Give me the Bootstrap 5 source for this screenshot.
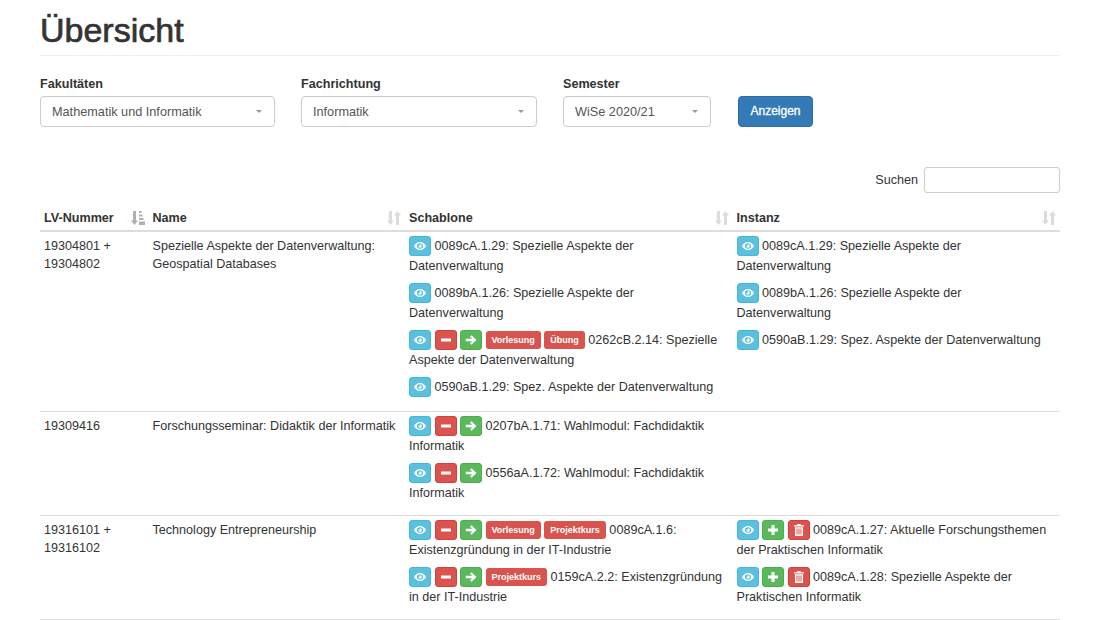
<!DOCTYPE html>
<html lang="de"><head><meta charset="utf-8"><title>Übersicht</title>
<link href="https://cdn.jsdelivr.net/npm/bootstrap@5.3.0/dist/css/bootstrap.min.css" rel="stylesheet">
<style>
html,body{height:620px;overflow:hidden}
body{font:12.6px/20px "Liberation Sans",Arial,sans-serif;color:#333;background:#fff;padding:0 40px}
.head-title{font:400 34px/38px "Liberation Sans",Arial,sans-serif;color:#333;margin:0;padding:11px 0 6px;border-bottom:1px solid #eee;-webkit-text-stroke:.7px #333}
.filter-row{margin-top:18px;height:72px}
.filter-row label{font-weight:700;display:block;margin-bottom:2px;line-height:20px;color:#333}
.pick{height:31px;border:1px solid #ccc;border-radius:4px;padding:0 12px 0 11px;color:#555;font-size:12.7px;box-shadow:inset 0 1px 1px rgba(0,0,0,.03)}
.pick i{width:0;height:0;border:3px solid transparent;border-top:3px solid #999;border-bottom:0}
.w-a{width:235px;margin-right:26px}.w-b{width:236px;margin-right:26px}.w-c{width:148px;margin-right:27px}
.go{width:75px;height:31px;padding:0;font-size:12px;line-height:29px;background:#337ab7;border:1px solid #2e6da4;border-radius:4px;color:#fff;margin-top:22px;-webkit-text-stroke:.3px #fff}
.search-row{margin-top:21px;height:26px;gap:6px}
.search-row input{width:136px;height:26px;min-height:0;border:1px solid #ccc;border-radius:3px;padding:0 6px}
.data{table-layout:fixed;width:1020px;--bs-table-color:#333;font-size:12.6px;margin:12px 0 0}
.data th,.data td{padding:4px 4px 5px;border-bottom:1px solid #ddd;vertical-align:top;line-height:20px}
.data td:nth-child(-n+2){line-height:18px;padding-top:5px}
.data th{padding:3px 4px 2px;border-bottom:2px solid #ddd;font-weight:700;line-height:20px}
.data tbody tr:first-child td{padding-bottom:7px}
.data th>div{display:flex;justify-content:space-between;align-items:center}
.data p{margin:0 0 7px}
.sorter{width:14px;height:14px;fill:#dcdcdc;flex:none}
.sorter.on{fill:#b0b0b0}
.ic{display:inline-flex;align-items:center;justify-content:center;width:22px;height:20px;padding:0;border-radius:3px;vertical-align:top;border:1px solid;color:#fff}
.ic svg{width:12px;height:12px;fill:#fff}
.ic-i{background:#5bc0de;border-color:#46b8da}.ic-d{background:#d9534f;border-color:#d43f3a}.ic-s{background:#5cb85c;border-color:#4cae4c}
.tag{display:inline-block;font:700 9px/12px "Liberation Sans",Arial,sans-serif;background:#d9534f;color:#fff;border-radius:3px;padding:3px 6px;vertical-align:top;margin-top:1px}
</style></head><body>
<svg width="0" height="0" class="d-none"><defs>
<symbol id="eye" viewBox="0 0 12 12"><path fill-rule="evenodd" d="M6 2C3.200 2 1 4.200 0 6c1 1.800 3.200 4 6 4s5-2.200 6-4c-1-1.800-3.200-4-6-4zm0 1.200c1.800 0 3.200 1.100 3.200 2.800S7.800 8.800 6 8.800 2.800 7.700 2.800 6 4.200 3.200 6 3.200z"/><path d="M6 4.200a1.800 1.800 0 1 1-1.800 1.800c.5.400 1.600 0 1.800-1.800z"/></symbol>
<symbol id="minus" viewBox="0 0 12 12"><rect x="1" y="4.500" width="10" height="3" rx=".3"/></symbol>
<symbol id="plus" viewBox="0 0 12 12"><path d="M4.500 1h3v3.500H11v3H7.500V11h-3V7.500H1v-3h3.500z"/></symbol>
<symbol id="right" viewBox="0 0 12 12"><path d="M6.500 1.200 11.500 6l-5 4.800-1.500-1.500L7.300 7.200H.8V4.800h6.500L5 2.700z"/></symbol>
<symbol id="trash" viewBox="0 0 12 12"><path fill-rule="evenodd" d="M4.500 0h3l.5 1.200h3V2.500H1V1.200h3zM2 3.200h8V12H2zM3.500 4.500v6h1v-6zm2 0v6h1v-6zm2 0v6h1v-6z"/></symbol>
<symbol id="sortb" viewBox="0 0 14 14"><path d="M2 0h3v9.500h2L3.500 14 0 9.500h2zM10.500 0 14 4.500h-2V14H9V4.500H7z"/></symbol>
<symbol id="sorta" viewBox="0 0 14 14"><path d="M2 0h3v9.500h2L3.500 14 0 9.500h2z"/><path d="M8 0h2.500v2H8zM8 3.500h3.500v2H8zM8 7h4.500v2H8zM8 10.500h6V14H8z"/></symbol>
</defs></svg>

<h1 class="head-title">Übersicht</h1>

<div class="d-flex filter-row">
  <div class="w-a"><label>Fakultäten</label><div class="pick d-flex align-items-center justify-content-between"><span>Mathematik und Informatik</span><i></i></div></div>
  <div class="w-b"><label>Fachrichtung</label><div class="pick d-flex align-items-center justify-content-between"><span>Informatik</span><i></i></div></div>
  <div class="w-c"><label>Semester</label><div class="pick d-flex align-items-center justify-content-between"><span>WiSe 2020/21</span><i></i></div></div>
  <button class="btn go">Anzeigen</button>
</div>

<div class="d-flex justify-content-end align-items-center search-row"><span>Suchen</span><input type="search" class="form-control" aria-label="Suchen"></div>

<table class="table data">
<colgroup><col style="width:108.5px"><col style="width:256.5px"><col style="width:327.5px"><col style="width:327.5px"></colgroup>
<thead><tr>
<th><div>LV-Nummer<svg class="sorter on"><use href="#sorta"/></svg></div></th>
<th><div>Name<svg class="sorter"><use href="#sortb"/></svg></div></th>
<th><div>Schablone<svg class="sorter"><use href="#sortb"/></svg></div></th>
<th><div>Instanz<svg class="sorter"><use href="#sortb"/></svg></div></th>
</tr></thead>
<tbody>
<tr><td>19304801 + 19304802</td><td>Spezielle Aspekte der Datenverwaltung: Geospatial Databases</td>
<td>
<p><span class="btn ic ic-i"><svg><use href="#eye"/></svg></span> 0089cA.1.29: Spezielle Aspekte der Datenverwaltung</p>
<p><span class="btn ic ic-i"><svg><use href="#eye"/></svg></span> 0089bA.1.26: Spezielle Aspekte der Datenverwaltung</p>
<p><span class="btn ic ic-i"><svg><use href="#eye"/></svg></span> <span class="btn ic ic-d"><svg><use href="#minus"/></svg></span> <span class="btn ic ic-s"><svg><use href="#right"/></svg></span> <span class="tag">Vorlesung</span> <span class="tag">Übung</span> 0262cB.2.14: Spezielle Aspekte der Datenverwaltung</p>
<p><span class="btn ic ic-i"><svg><use href="#eye"/></svg></span> 0590aB.1.29: Spez. Aspekte der Datenverwaltung</p>
</td>
<td>
<p><span class="btn ic ic-i"><svg><use href="#eye"/></svg></span> 0089cA.1.29: Spezielle Aspekte der Datenverwaltung</p>
<p><span class="btn ic ic-i"><svg><use href="#eye"/></svg></span> 0089bA.1.26: Spezielle Aspekte der Datenverwaltung</p>
<p><span class="btn ic ic-i"><svg><use href="#eye"/></svg></span> 0590aB.1.29: Spez. Aspekte der Datenverwaltung</p>
</td></tr>
<tr><td>19309416</td><td>Forschungsseminar: Didaktik der Informatik</td>
<td>
<p><span class="btn ic ic-i"><svg><use href="#eye"/></svg></span> <span class="btn ic ic-d"><svg><use href="#minus"/></svg></span> <span class="btn ic ic-s"><svg><use href="#right"/></svg></span> 0207bA.1.71: Wahlmodul: Fachdidaktik Informatik</p>
<p><span class="btn ic ic-i"><svg><use href="#eye"/></svg></span> <span class="btn ic ic-d"><svg><use href="#minus"/></svg></span> <span class="btn ic ic-s"><svg><use href="#right"/></svg></span> 0556aA.1.72: Wahlmodul: Fachdidaktik Informatik</p>
</td><td></td></tr>
<tr><td>19316101 + 19316102</td><td>Technology Entrepreneurship</td>
<td>
<p><span class="btn ic ic-i"><svg><use href="#eye"/></svg></span> <span class="btn ic ic-d"><svg><use href="#minus"/></svg></span> <span class="btn ic ic-s"><svg><use href="#right"/></svg></span> <span class="tag">Vorlesung</span> <span class="tag">Projektkurs</span> 0089cA.1.6: Existenzgründung in der IT-Industrie</p>
<p><span class="btn ic ic-i"><svg><use href="#eye"/></svg></span> <span class="btn ic ic-d"><svg><use href="#minus"/></svg></span> <span class="btn ic ic-s"><svg><use href="#right"/></svg></span> <span class="tag">Projektkurs</span> 0159cA.2.2: Existenzgründung in der IT-Industrie</p>
</td>
<td>
<p><span class="btn ic ic-i"><svg><use href="#eye"/></svg></span> <span class="btn ic ic-s"><svg><use href="#plus"/></svg></span> <span class="btn ic ic-d"><svg><use href="#trash"/></svg></span> 0089cA.1.27: Aktuelle Forschungsthemen der Praktischen Informatik</p>
<p><span class="btn ic ic-i"><svg><use href="#eye"/></svg></span> <span class="btn ic ic-s"><svg><use href="#plus"/></svg></span> <span class="btn ic ic-d"><svg><use href="#trash"/></svg></span> 0089cA.1.28: Spezielle Aspekte der Praktischen Informatik</p>
</td></tr>
</tbody></table>
</body></html>
